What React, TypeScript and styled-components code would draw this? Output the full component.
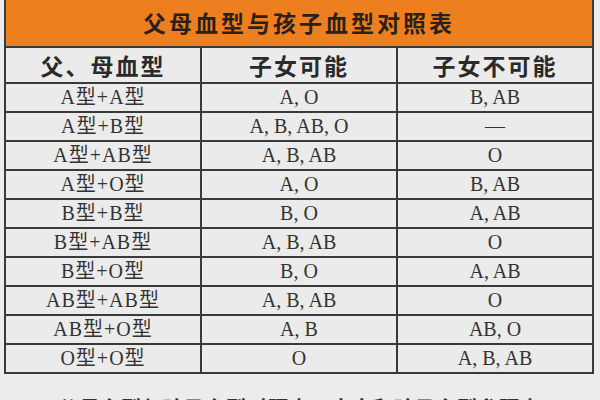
import * as React from "react";
import styled, { createGlobalStyle } from "styled-components";

const GlobalStyle = createGlobalStyle`
  html, body {
    margin: 0;
    padding: 0;
    background: #ececec;
  }
  body {
    width: 600px;
    height: 400px;
    overflow: hidden;
  }
`;

const Page = styled.div`
  padding: 0 6px 0 4px;
  font-family: "Liberation Serif", "Noto Sans CJK SC", serif;
  color: #2e2e2e;
`;

const Table = styled.table`
  width: 590px;
  border-collapse: collapse;
  table-layout: fixed;
  background: #ebebeb;
`;

const TitleCell = styled.th`
  height: 44px;
  padding: 0 0 2px;
  background: #ee7f1e;
  border: 2px solid #3a3a3a;
  border-top: none;
  font-family: "Noto Sans CJK SC", sans-serif;
  font-size: 23px;
  font-weight: 700;
  letter-spacing: 3px;
  color: #2b2118;
  text-align: center;
`;

const HeadCell = styled.th`
  height: 34px;
  padding: 0;
  border: 2px solid #3a3a3a;
  font-family: "Noto Sans CJK SC", sans-serif;
  font-size: 23px;
  font-weight: 700;
  letter-spacing: 2px;
  color: #2a2a2a;
  text-align: center;
`;

const Cell = styled.td`
  height: 27px;
  padding: 0;
  border: 2px solid #3a3a3a;
  font-size: 20px;
  line-height: 27px;
  text-align: center;
  color: #333;
`;

const ParentText = styled.span`
  letter-spacing: 1px;
`;

const Caption = styled.div`
  margin-top: 18px;
  text-align: center;
  font-family: "Noto Sans CJK SC", sans-serif;
  font-size: 21px;
  font-weight: 700;
  color: #2c3345;
`;

const rows: [string, string, string][] = [
  ["A型+A型", "A, O", "B, AB"],
  ["A型+B型", "A, B, AB, O", "—"],
  ["A型+AB型", "A, B, AB", "O"],
  ["A型+O型", "A, O", "B, AB"],
  ["B型+B型", "B, O", "A, AB"],
  ["B型+AB型", "A, B, AB", "O"],
  ["B型+O型", "B, O", "A, AB"],
  ["AB型+AB型", "A, B, AB", "O"],
  ["AB型+O型", "A, B", "AB, O"],
  ["O型+O型", "O", "A, B, AB"],
];

const App = () => (
  <Page>
    <GlobalStyle />
    <Table>
      <thead>
        <tr>
          <TitleCell colSpan={3}>父母血型与孩子血型对照表</TitleCell>
        </tr>
        <tr>
          <HeadCell>父、母血型</HeadCell>
          <HeadCell>子女可能</HeadCell>
          <HeadCell>子女不可能</HeadCell>
        </tr>
      </thead>
      <tbody>
        {rows.map(([parents, possible, impossible]) => (
          <tr key={parents}>
            <Cell>
              <ParentText>{parents}</ParentText>
            </Cell>
            <Cell>{possible}</Cell>
            <Cell>{impossible}</Cell>
          </tr>
        ))}
      </tbody>
    </Table>
    <Caption>父母血型与孩子血型对照表，大人和孩子血型参照表</Caption>
  </Page>
);

export default App;
